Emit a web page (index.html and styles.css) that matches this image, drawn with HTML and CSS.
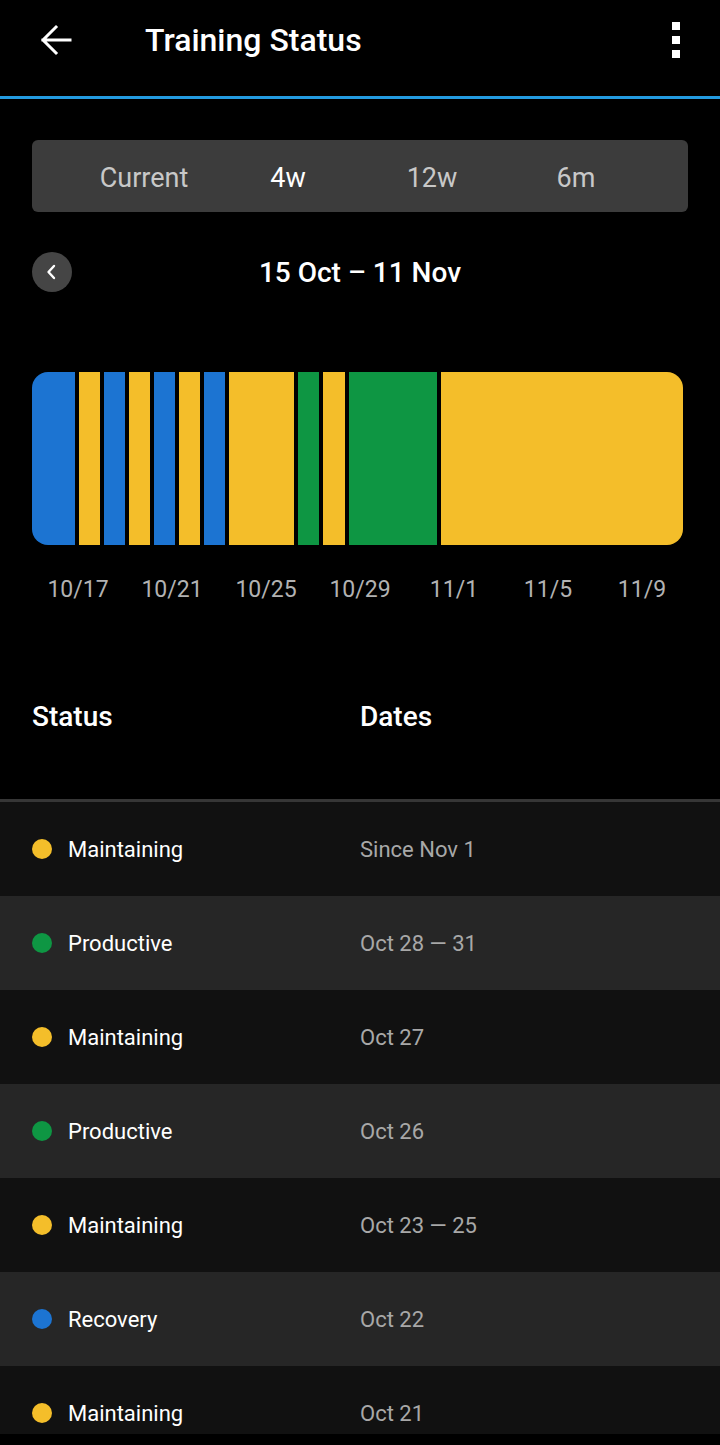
FILE: index.html
```html
<!DOCTYPE html>
<html lang="en">
<head>
  <meta charset="UTF-8">
  <meta name="viewport" content="width=device-width, initial-scale=1">
  <title>Training Status</title>
  <link rel="stylesheet" href="styles.css">
</head>
<body>
  <header class="topbar">
    <svg class="back-icon" width="32" height="32" viewBox="0 0 32 32">
      <path d="M30 16 H3 M16 3 L3 16 L16 29" fill="none" stroke="#fff" stroke-width="3" stroke-linecap="square"/>
    </svg>
    <h1 class="title">Training Status</h1>
    <div class="kebab">
      <span></span><span></span><span></span>
    </div>
  </header>
  <div class="accent-line"></div>

  <main class="content">
    <!-- Period selector -->
    <div class="segmented">
      <div class="seg">Current</div>
      <div class="seg active">4w</div>
      <div class="seg">12w</div>
      <div class="seg">6m</div>
    </div>

    <!-- Date range navigation -->
    <div class="range-nav">
      <button class="prev-btn">
        <svg width="14" height="16" viewBox="0 0 14 16">
          <path d="M9 2 L3.5 8 L9 14" fill="none" stroke="#fff" stroke-width="2.4" stroke-linecap="round" stroke-linejoin="round"/>
        </svg>
      </button>
      <div class="range-title">15 Oct – 11 Nov</div>
    </div>

    <!-- Status timeline -->
    <div class="chart">
      <div class="bar recovery" style="flex-grow: 43"></div>
      <div class="bar maintaining" style="flex-grow: 21"></div>
      <div class="bar recovery" style="flex-grow: 21"></div>
      <div class="bar maintaining" style="flex-grow: 21"></div>
      <div class="bar recovery" style="flex-grow: 21"></div>
      <div class="bar maintaining" style="flex-grow: 21"></div>
      <div class="bar recovery" style="flex-grow: 21"></div>
      <div class="bar maintaining" style="flex-grow: 65"></div>
      <div class="bar productive" style="flex-grow: 21"></div>
      <div class="bar maintaining" style="flex-grow: 22"></div>
      <div class="bar productive" style="flex-grow: 88"></div>
      <div class="bar maintaining" style="flex-grow: 242"></div>
    </div>
    <div class="axis">
      <span>10/17</span>
      <span>10/21</span>
      <span>10/25</span>
      <span>10/29</span>
      <span>11/1</span>
      <span>11/5</span>
      <span>11/9</span>
    </div>

    <div class="table-head">
      <div class="col-status">Status</div>
      <div class="col-dates">Dates</div>
    </div>
  </main>

  <div class="status-list">
    <div class="row">
      <div class="col-status"><span class="dot maintaining"></span>Maintaining</div>
      <div class="col-dates">Since Nov 1</div>
    </div>
    <div class="row">
      <div class="col-status"><span class="dot productive"></span>Productive</div>
      <div class="col-dates">Oct 28 — 31</div>
    </div>
    <div class="row">
      <div class="col-status"><span class="dot maintaining"></span>Maintaining</div>
      <div class="col-dates">Oct 27</div>
    </div>
    <div class="row">
      <div class="col-status"><span class="dot productive"></span>Productive</div>
      <div class="col-dates">Oct 26</div>
    </div>
    <div class="row">
      <div class="col-status"><span class="dot maintaining"></span>Maintaining</div>
      <div class="col-dates">Oct 23 — 25</div>
    </div>
    <div class="row">
      <div class="col-status"><span class="dot recovery"></span>Recovery</div>
      <div class="col-dates">Oct 22</div>
    </div>
    <div class="row">
      <div class="col-status"><span class="dot maintaining"></span>Maintaining</div>
      <div class="col-dates">Oct 21</div>
    </div>
  </div>
</body>
</html>
```

FILE: styles.css
```css
/* Dark, Garmin-like training status screen */
body {
  margin: 0;
  background: #000;
  color: #fff;
  font-family: Roboto, "Liberation Sans", sans-serif;
  height: 1445px;
  overflow: hidden;
}
.topbar {
  height: 96px;
  display: flex;
  align-items: center;
  padding: 0 40px 16px;
  box-sizing: border-box;
}
.back-icon {
  display: block;
}
.title {
  flex: 1;
  margin: 0 0 0 73px;
  font-size: 32px;
  font-weight: 500;
  color: #fff;
}
.kebab {
  display: flex;
  flex-direction: column;
  gap: 6px;
}
.kebab span {
  width: 8px;
  height: 8px;
  background: #fff;
}
.accent-line {
  height: 3px;
  background: #239be0;
}
.content {
  padding: 41px 32px 0;
}
.segmented {
  height: 72px;
  box-sizing: border-box;
  background: #3c3c3c;
  border-radius: 6px;
  display: flex;
  align-items: center;
  padding: 3px 40px 0;
}
.seg {
  width: 144px;
  text-align: center;
  font-size: 27px;
  color: #c8c8c8;
}
.seg.active {
  color: #fff;
}
.range-nav {
  margin-top: 40px;
  height: 40px;
  display: flex;
  align-items: center;
}
.prev-btn {
  width: 40px;
  height: 40px;
  border: none;
  border-radius: 50%;
  background: #454545;
  padding: 0;
  display: flex;
  align-items: center;
  justify-content: center;
}
.range-title {
  flex: 1;
  text-align: center;
  font-size: 28px;
  font-weight: 500;
  margin-right: 40px;
  margin-top: 1px;
}
.chart {
  margin-top: 80px;
  width: 651px;
  height: 173px;
  display: flex;
  gap: 4px;
  border-radius: 16px;
  overflow: hidden;
}
.bar {
  flex-basis: 0;
}
.recovery { background: #1c74d2; }
.maintaining { background: #f4be2a; }
.productive { background: #0e9643; }
.axis {
  margin: 31px -1px 0;
  display: grid;
  grid-template-columns: repeat(7, 1fr);
  text-align: center;
  font-size: 23px;
  line-height: 27px;
  color: #b2b2b2;
}
.table-head {
  margin: 98px -32px 0;
  display: flex;
  font-size: 28px;
  font-weight: 500;
  line-height: 32px;
  padding: 0 0 66px 32px;
  border-bottom: 3px solid #363636;
}
.col-status {
  width: 328px;
  display: flex;
  align-items: center;
}
.col-dates {
  flex: 1;
}
.status-list {
  height: 632px;
  overflow: hidden;
}
.row {
  height: 94px;
  display: flex;
  align-items: center;
  padding-left: 32px;
  font-size: 22px;
  background: #111;
}
.row:nth-child(even) {
  background: #262626;
}
.row .col-dates {
  color: #a8a8a8;
}
.dot {
  width: 20px;
  height: 20px;
  border-radius: 50%;
  margin-right: 16px;
}
```
